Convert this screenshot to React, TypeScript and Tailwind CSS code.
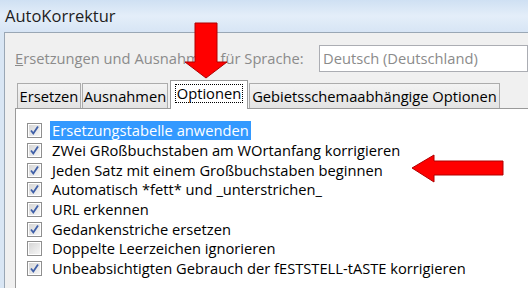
import type { ReactNode } from "react";

const options = [
  { label: "Ersetzungstabelle anwenden", checked: true, selected: true },
  { label: "ZWei GRoßbuchstaben am WOrtanfang korrigieren", checked: true },
  { label: "Jeden Satz mit einem Großbuchstaben beginnen", checked: true },
  { label: "Automatisch *fett* und _unterstrichen_", checked: true },
  { label: "URL erkennen", checked: true },
  { label: "Gedankenstriche ersetzen", checked: true },
  { label: "Doppelte Leerzeichen ignorieren", checked: false },
  { label: "Unbeabsichtigten Gebrauch der fESTSTELL-tASTE korrigieren", checked: true },
];

function CheckBox({ checked }: { checked: boolean }) {
  return (
    <div className="w-[15px] h-[15px] border border-[#8f8f8f] bg-white p-[1px] shrink-0">
      <div className="w-full h-full bg-gradient-to-br from-[#d6d6d6] to-[#f6f6f6] flex items-center justify-center">
        {checked && (
          <svg width="11" height="11" viewBox="0 0 11 11">
            <path d="M2 5.5 L4.3 8.5 L9 1.5" fill="none" stroke="#3f5fa8" strokeWidth="1.8" />
          </svg>
        )}
      </div>
    </div>
  );
}

function Tab({ children, width, active }: { children: ReactNode; width: string; active?: boolean }) {
  if (active) {
    return (
      <div
        className={`${width} h-[29px] -mb-px relative z-10 bg-white border border-b-0 border-[#9a9a9a] flex items-start justify-center pt-[3px]`}
      >
        <span className="border border-dotted border-black px-[1px] leading-[17px]">{children}</span>
      </div>
    );
  }
  return (
    <div
      className={`${width} h-[25px] bg-gradient-to-b from-[#f3f3f3] to-[#e3e3e3] border border-b-0 border-[#acacac] flex items-center justify-center`}
    >
      {children}
    </div>
  );
}

export default function App() {
  return (
    <div
      className="w-[528px] h-[288px] overflow-hidden relative bg-[#dce8f5] text-[14.7px] text-black"
      style={{ fontFamily: '"Open Sans", "Noto Sans", sans-serif' }}
    >
      <div className="h-[32px] flex items-center pl-[5px] bg-gradient-to-b from-[#cfe0f3] via-[#e4eef9] to-[#d7e5f5] text-[16.5px] text-[#1e1e1e]">
        AutoKorrektur
      </div>
      <div className="flex h-[256px]">
        <div className="w-[4px] shrink-0 bg-[#d9e6f4]" />
        <div className="flex-1 bg-[#f0f0f0] border-l border-t border-[#9aa7b5] flex flex-col">
          <div className="flex items-center h-[27px] mt-[12px]">
            <span className="pl-[10px] w-[314px] text-[#8b8b8b] whitespace-nowrap">
              <span className="underline">E</span>rsetzungen und Ausnahmen für Sprache:
            </span>
            <div className="flex-1 h-[27px] border border-[#abadb3] bg-white pl-[3px] flex items-center text-[#8b8b8b]">
              Deutsch (Deutschland)
            </div>
          </div>
          <div className="flex items-end ml-[12px] mt-[8px]">
            <Tab width="w-[64px]">Ersetzen</Tab>
            <div className="w-px" />
            <Tab width="w-[86px]">Ausnahmen</Tab>
            <div className="w-[2px]" />
            <Tab width="w-[78px]" active>
              Optionen
            </Tab>
            <div className="w-px" />
            <Tab width="w-[251px]">Gebietsschemaabhängige Optionen</Tab>
          </div>
          <div className="flex-1 ml-[10px] bg-white border-l border-t border-[#9a9a9a] pt-[12px] pl-[11px] flex flex-col">
            {options.map((o) => (
              <div key={o.label} className="h-[19.7px] flex items-center shrink-0">
                <CheckBox checked={o.checked} />
                <span
                  className={`ml-[8px] px-[2px] leading-[19px] whitespace-nowrap ${
                    o.selected ? "bg-[#3399ff] text-white" : ""
                  }`}
                >
                  {o.label}
                </span>
              </div>
            ))}
          </div>
        </div>
      </div>

      <svg className="absolute left-0 top-0 pointer-events-none" width="528" height="288">
        <polygon
          points="195,23 217,23 217,62 227,62 206,78 185,62 195,62"
          fill="#ff0000"
          stroke="#b00000"
          strokeWidth="1"
        />
        <polygon
          points="503,161 503,175 434,175 434,182 412,168 434,155 434,161"
          fill="#ff0000"
          stroke="#b00000"
          strokeWidth="1"
        />
      </svg>
    </div>
  );
}
